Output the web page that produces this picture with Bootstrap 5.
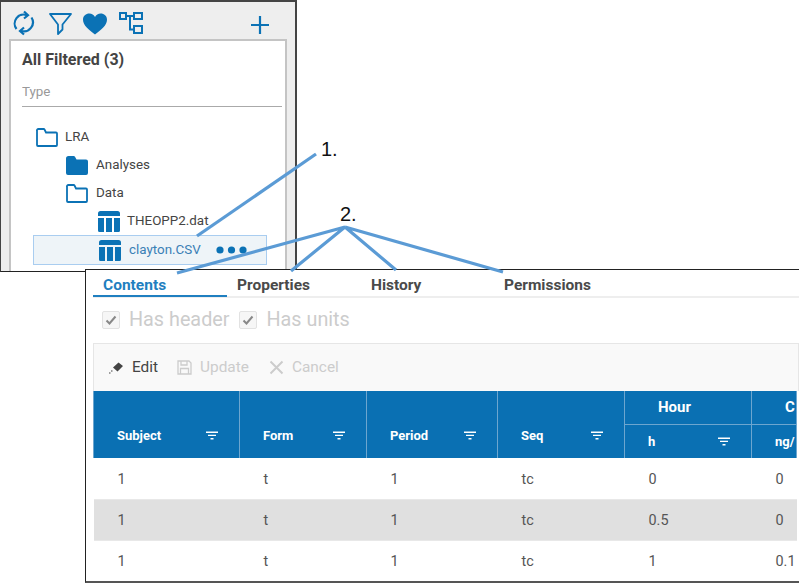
<!DOCTYPE html>
<html lang="en">
<head>
<meta charset="UTF-8">
<meta name="viewport" content="width=device-width, initial-scale=1.0">
<title>Data browser</title>
<link href="https://cdn.jsdelivr.net/npm/bootstrap@5.3.0/dist/css/bootstrap.min.css" rel="stylesheet">
<script src="https://cdn.jsdelivr.net/npm/bootstrap@5.3.0/dist/js/bootstrap.bundle.min.js"></script>
<style>
body { margin: 0; width: 799px; height: 583px; overflow: hidden; background: #fff; font-family: Roboto, "Liberation Sans", sans-serif; }
.blue-ic { color: #0b72b5; display: block; flex: none; }

/* collage windows */
.shot { position: absolute; overflow: hidden; }
.shot-tree { left: 0; top: 0; width: 297px; height: 272px; background: #eee; border: 2px solid #444; border-bottom: 1px solid #222; border-left-width: 1px; }
.shot-detail { left: 85px; top: 269px; width: 714px; height: 314px; background: #fff; border: 1px solid #222; border-bottom: 2px solid #555; border-right: 0; }

/* tree window */
.tree-tools { height: 37px; padding: 8px 0 0 12px; gap: 0; }
.tool-filter { margin: 3px 0 0 14px; }
.tool-heart { margin: 3px 0 0 11px; }
.tool-tree { margin: 2px 0 0 12px; }
.tool-plus { margin: 6px 0 0 108px; }
.tree-panel { margin-left: 8px; width: 278px; height: 240px; background: #fff; border: 2px solid #c4c4c4; border-bottom: 0; padding: 10px 2px 0 11px; }
.panel-title { font-size: 16px; font-weight: 700; color: #444; line-height: 18px; margin: 0; font-family: Roboto, sans-serif; }
.type-input { display: block; width: 260px; height: 31px; margin-top: 7px; padding: 0; border: 0; border-bottom: 1px solid #aaa; border-radius: 0; font-size: 13.4px; color: #999; background: transparent; }
.type-input::placeholder { color: #999; opacity: 1; }
.tree-list { margin-top: 16px; font-size: 13.4px; color: #444; }
.tree-row { height: 28px; display: flex; align-items: center; gap: 7px; }
.lvl-1 { padding-left: 14px; }
.lvl-2 { padding-left: 44px; gap: 8px; }
.lvl-3 { padding-left: 76px; }
.tree-row.picked { width: 234px; height: 30px; margin-left: 11px; padding-left: 65px; background: #eef4f8; border: 1px solid #a9cdf0; color: #3a80b6; gap: 8px; }
.picked .dots { margin-left: 7px; }

/* detail window */
.detail-tabs { height: 28px; margin-left: 7px; border-bottom: 2px solid #eee; flex-wrap: nowrap; }
.detail-tabs .nav-link { padding: 7px 0 0 10px; height: 27px; font-size: 15.5px; line-height: 17px; font-weight: 700; color: #4a4a4a; border-bottom: 2px solid transparent; }
.detail-tabs .nav-link.active { color: #1f7fc0; border-bottom-color: #1f7fc0; }
.tab-a { width: 134px; }
.tab-b { width: 134px; }
.tab-c { width: 133px; }
.opts { height: 45px; margin-left: 16px; padding-bottom: 2px; gap: 10px; color: #ccc; font-size: 19.8px; }
.opts label { display: flex; align-items: center; gap: 9px; }
.opts .form-check-input { width: 18px; height: 18px; margin: 0; border-radius: 2px; opacity: 1; background-color: #f6f6f6; border-color: #e2e2e2;
  background-size: 14px; background-image: url("data:image/svg+xml,%3Csvg xmlns='http://www.w3.org/2000/svg' viewBox='0 0 14 14'%3E%3Cpath d='M2.5 7.5l3 3 6-7' fill='none' stroke='%23888' stroke-width='2'/%3E%3C/svg%3E"); }
.grid-bar { margin-left: 7px; height: 48px; background: #f9f9f9; border: 1px solid #e6e6e6; border-bottom: 0; padding-left: 14px; }
.grid-bar .btn { display: flex; align-items: center; gap: 8px; padding: 0; border: 0; font-size: 15.4px; color: #444; opacity: 1; }
.grid-bar .btn:disabled { color: #ccc; }
.grid-bar .b-edit { margin-right: 19px; }
.grid-bar .b-update { margin-right: 20px; }

.data-grid { margin: 0 0 0 7px; width: 703px; table-layout: fixed; font-size: 14.4px; color: #555; }
.data-grid th { background: #0a70b3; color: #fff; font-size: 13px; font-weight: 700; border: 1px solid #6da6cf; border-top: 0; border-bottom: 0; padding: 0 0 0 23px; vertical-align: middle; box-shadow: none; white-space: nowrap; overflow: hidden; }
.data-grid .head-cell { display: flex; align-items: center; justify-content: space-between; padding-right: 21px; }
.data-grid .head-low { height: 44px; vertical-align: middle; padding-top: 22px; }
.data-grid .group-top { height: 33px; border-bottom: 1px solid #6da6cf; font-size: 15px; padding-left: 33px; }
.data-grid .unit-row { height: 34px; }
.data-grid .unit-row th { padding-left: 23px; }
.data-grid td { height: 41px; padding: 3px 0 0 24px; vertical-align: middle; border-bottom: 1px solid #e8e8e8; background: #fff; box-shadow: none; color: #555; overflow: hidden; white-space: nowrap; }
.data-grid tr.alt td { background: #e0e0e0; }
.data-grid tbody tr:last-child td { border-bottom: 0; }

/* callouts */
.callouts { position: absolute; left: 0; top: 0; width: 799px; height: 583px; pointer-events: none; }
.call-num { position: absolute; font-family: "Liberation Sans", sans-serif; font-size: 20px; line-height: 22px; color: #111; }
.num-1 { left: 321px; top: 138px; }
.num-2 { left: 340px; top: 203px; }
</style>
</head>
<body>

<svg width="0" height="0" class="position-absolute">
  <symbol id="ic-table" viewBox="0 0 22 21">
    <path d="M0 5V2.500A2.500 2.500 0 0 1 2.500 0h17A2.500 2.500 0 0 1 22 2.500V5z" fill="currentColor"/>
    <path d="M0 7h6v14H1.500A1.500 1.500 0 0 1 0 19.500zM8 7h6v14H8zM16 7h6v12.500a1.500 1.500 0 0 1-1.500 1.500H16z" fill="currentColor"/>
  </symbol>
  <symbol id="ic-folder" viewBox="0 0 22 19">
    <path d="M1 3V17a1 1 0 0 0 1 1H20a1 1 0 0 0 1-1V5.500a1 1 0 0 0-1-1H10L8.500 1.500a1 1 0 0 0-.8-.5H2.500A1.500 1.500 0 0 0 1 3z" fill="none" stroke="currentColor" stroke-width="1.800"/>
  </symbol>
  <symbol id="ic-folder-full" viewBox="0 0 22 19">
    <path d="M0 2.500V17a2 2 0 0 0 2 2H20a2 2 0 0 0 2-2V5.500a2 2 0 0 0-2-2H10.500L9 .8A1.500 1.500 0 0 0 7.700 0H2.500A2.500 2.500 0 0 0 0 2.500z" fill="currentColor"/>
  </symbol>
  <symbol id="ic-sift" viewBox="0 0 12 9">
    <path d="M0 .5h12v1.400H0zM2 3.700h8v1.400H2zM4.500 7h3v1.400h-3z" fill="currentColor"/>
  </symbol>
</svg>

<div class="shot shot-tree">
  <div class="tree-tools d-flex align-items-start">
    <svg class="blue-ic" width="22" height="26" viewBox="0 0 22 26" fill="none" stroke="currentColor" stroke-width="2.200">
      <path d="M3.500 19A9 9 0 0 1 14 5.200"/>
      <path d="M18.500 7.500A9 9 0 0 1 8 20.800"/>
      <path d="M11 1.500l4 3.800-4 3.200M11 17.500l-4 3.400 4 3.600"/>
    </svg>
    <svg class="blue-ic tool-filter" width="23" height="22" viewBox="0 0 23 22" fill="none" stroke="currentColor" stroke-width="1.800">
      <path d="M1 1h21l-8.500 10.500v5L9 21V11.500z" stroke-linejoin="round"/>
    </svg>
    <svg class="blue-ic tool-heart" width="24" height="22" viewBox="0 0 24 22">
      <path d="M12 21.500C6 16.500 0 12.500 0 6.700 0 2.800 3 .5 6.300.5 8.800.5 10.900 1.800 12 4 13.100 1.800 15.200.5 17.700.5 21 .5 24 2.800 24 6.700c0 5.800-6 9.800-12 14.800z" fill="currentColor"/>
    </svg>
    <svg class="blue-ic tool-tree" width="24" height="22" viewBox="0 0 24 22" fill="none" stroke="currentColor" stroke-width="2">
      <path d="M1 1h6v6H1zM15 1h8v6h-8zM15 14h8v7h-8zM7 4h8M11 4v13.500h4"/>
    </svg>
    <svg class="blue-ic tool-plus" width="18" height="18" viewBox="0 0 18 18" fill="none" stroke="currentColor" stroke-width="2.200">
      <path d="M9 0v18M0 9h18"/>
    </svg>
  </div>
  <div class="tree-panel">
    <h6 class="panel-title">All Filtered (3)</h6>
    <input class="form-control shadow-none type-input" type="text" placeholder="Type">
    <div class="tree-list">
      <div class="tree-row lvl-1"><svg class="blue-ic" width="22" height="19"><use href="#ic-folder"/></svg>LRA</div>
      <div class="tree-row lvl-2"><svg class="blue-ic" width="22" height="19"><use href="#ic-folder-full"/></svg>Analyses</div>
      <div class="tree-row lvl-2"><svg class="blue-ic" width="22" height="19"><use href="#ic-folder"/></svg>Data</div>
      <div class="tree-row lvl-3"><svg class="blue-ic" width="22" height="21"><use href="#ic-table"/></svg>THEOPP2.dat</div>
      <div class="tree-row picked"><svg class="blue-ic" width="22" height="21"><use href="#ic-table"/></svg>clayton.CSV
        <svg class="blue-ic dots" width="31" height="8" viewBox="0 0 31 8"><circle cx="4" cy="4" r="3.600" fill="currentColor"/><circle cx="15.500" cy="4" r="3.600" fill="currentColor"/><circle cx="27" cy="4" r="3.600" fill="currentColor"/></svg>
      </div>
      <div class="tree-row lvl-3"><svg class="blue-ic" width="22" height="21"><use href="#ic-table"/></svg></div>
    </div>
  </div>
</div>

<div class="shot shot-detail">
  <ul class="nav detail-tabs">
    <li class="nav-item tab-a"><a class="nav-link active" href="#">Contents</a></li>
    <li class="nav-item tab-b"><a class="nav-link" href="#">Properties</a></li>
    <li class="nav-item tab-c"><a class="nav-link" href="#">History</a></li>
    <li class="nav-item"><a class="nav-link" href="#">Permissions</a></li>
  </ul>
  <div class="opts d-flex align-items-center">
    <label><input class="form-check-input" type="checkbox" checked disabled>Has header</label>
    <label><input class="form-check-input" type="checkbox" checked disabled>Has units</label>
  </div>
  <div class="grid-bar d-flex align-items-center">
    <button class="btn b-edit" type="button">
      <svg width="16" height="14" viewBox="0 0 16 14"><path d="M5 7.500l5.500-5 4.500 3.500-5.500 5.500zM1 12.500h1.500v1H1zM3 10.500h1.500v1H3z" fill="#444"/></svg>Edit
    </button>
    <button class="btn b-update" type="button" disabled>
      <svg width="15" height="15" viewBox="0 0 15 15" fill="none" stroke="#ccc" stroke-width="1.300"><path d="M1 1h11l2 2v11H1zM4 1v4h6V1M3.500 14V8.500h8V14"/></svg>Update
    </button>
    <button class="btn" type="button" disabled>
      <svg width="15" height="15" viewBox="0 0 15 15" fill="none" stroke="#ccc" stroke-width="2"><path d="M1.500 1.500l12 12M13.500 1.500l-12 12"/></svg>Cancel
    </button>
  </div>
  <table class="table data-grid">
    <colgroup><col style="width:146px"><col style="width:127px"><col style="width:131px"><col style="width:127px"><col style="width:127px"><col style="width:45px"></colgroup>
    <thead>
      <tr>
        <th rowspan="2" class="head-low"><div class="head-cell">Subject<svg width="12" height="9"><use href="#ic-sift"/></svg></div></th>
        <th rowspan="2" class="head-low"><div class="head-cell">Form<svg width="12" height="9"><use href="#ic-sift"/></svg></div></th>
        <th rowspan="2" class="head-low"><div class="head-cell">Period<svg width="12" height="9"><use href="#ic-sift"/></svg></div></th>
        <th rowspan="2" class="head-low"><div class="head-cell">Seq<svg width="12" height="9"><use href="#ic-sift"/></svg></div></th>
        <th class="group-top">Hour</th>
        <th class="group-top">C</th>
      </tr>
      <tr class="unit-row">
        <th><div class="head-cell">h<svg width="12" height="9"><use href="#ic-sift"/></svg></div></th>
        <th>ng/</th>
      </tr>
    </thead>
    <tbody id="gridBody"></tbody>
  </table>
</div>

<svg class="callouts" viewBox="0 0 799 583" fill="none" stroke="#5b9bd5" stroke-width="3.200">
  <path d="M197 236L316 154"/>
  <path d="M177 273L345 227L291 271M345 227L396 270M345 227L503 272"/>
</svg>
<span class="call-num num-1">1.</span>
<span class="call-num num-2">2.</span>

<script>
  // filas de la tabla
  const filas = [
    ['1', 't', '1', 'tc', '0', '0'],
    ['1', 't', '1', 'tc', '0.5', '0'],
    ['1', 't', '1', 'tc', '1', '0.1']
  ];
  const cuerpo = document.getElementById('gridBody');
  filas.forEach((fila, i) => {
    const tr = document.createElement('tr');
    if (i === 1) tr.className = 'alt';
    tr.innerHTML = fila.map(v => `<td>${v}</td>`).join('');
    cuerpo.appendChild(tr);
  });
</script>
</body>
</html>
